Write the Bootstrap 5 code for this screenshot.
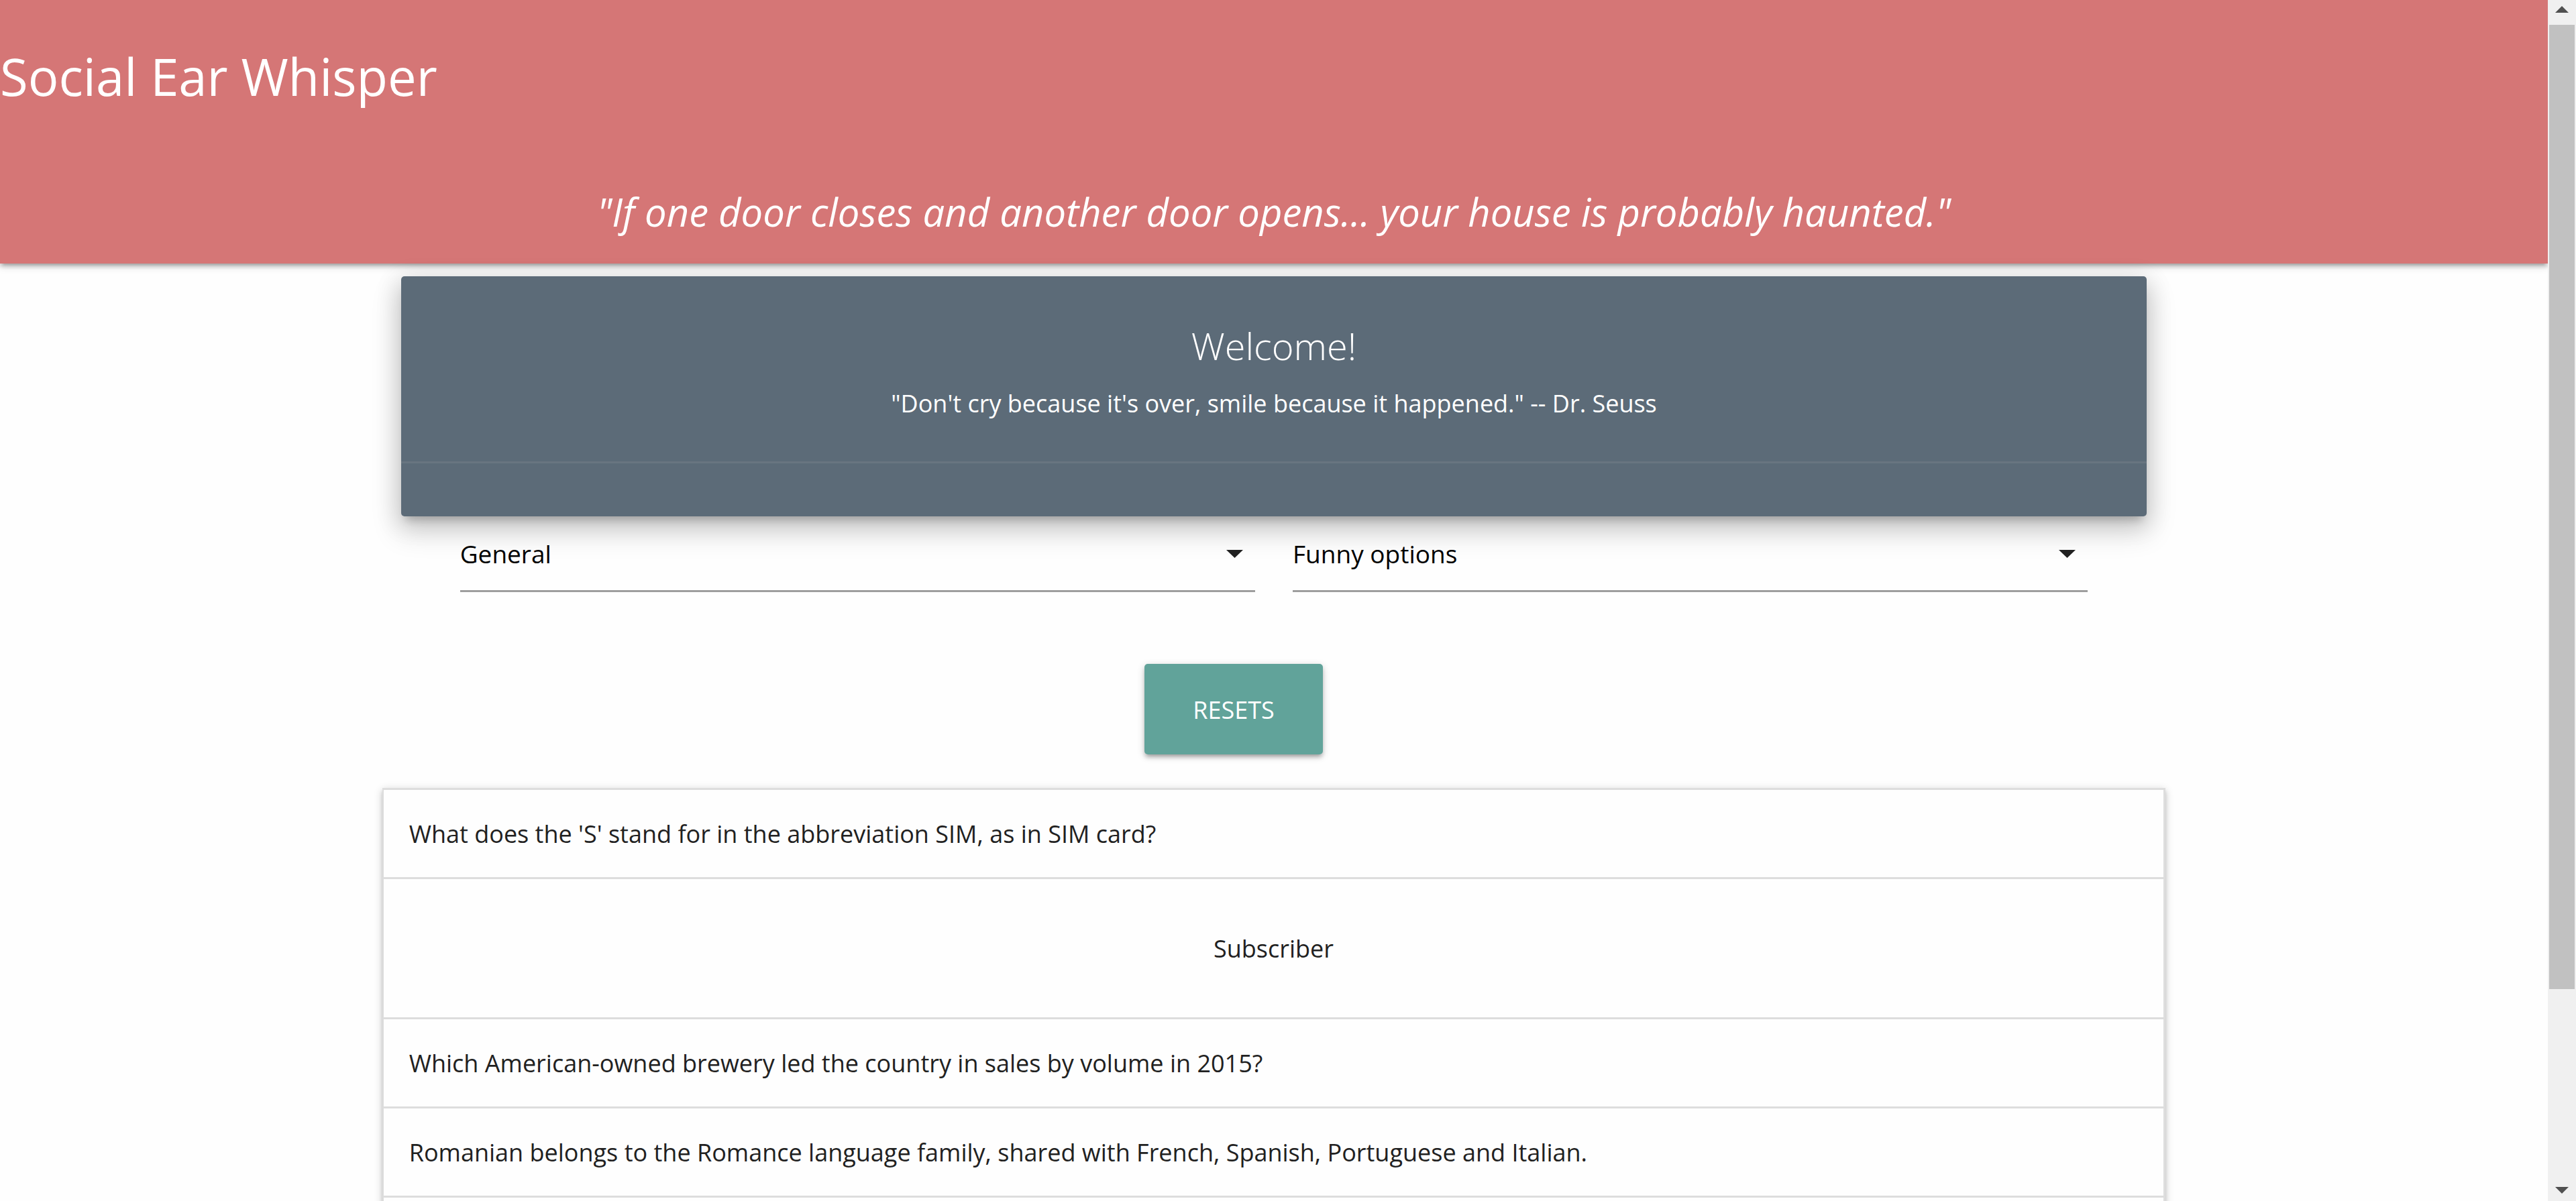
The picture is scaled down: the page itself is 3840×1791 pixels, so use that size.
<!DOCTYPE html>
<html lang="en">
<head>
<meta charset="utf-8">
<meta name="viewport" content="width=device-width, initial-scale=1">
<title>Social Ear Whisper</title>
<link href="https://cdn.jsdelivr.net/npm/bootstrap@5.3.0/dist/css/bootstrap.min.css" rel="stylesheet">
<style>
  body { font-family: "Open Sans", "Noto Sans", sans-serif; font-size: 36px; line-height: 56px; color: #212121; background: #fefefe; }
  .site-head { background: #d57676; padding: 64px 0 37px; box-shadow: 0 5px 5px 0 rgba(0,0,0,.14), 0 7px 3px -5px rgba(0,0,0,.12), 0 3px 12px 0 rgba(0,0,0,.2); }
  .brand { font-size: 76px; line-height: 100px; }
  .tagline { font-size: 58px; line-height: 80px; margin-top: 112px; }
  .page-body { width: 70%; }
  .welcome { margin: 19px 28px 0; background: #5c6b78; border-radius: 5px; box-shadow: 0 20px 42px 5px rgba(0,0,0,.14), 0 8px 35px 5px rgba(0,0,0,.12), 0 12px 12px -7px rgba(0,0,0,.2); }
  .welcome-main { padding: 60px 60px 58px; }
  .welcome-title { font-size: 56px; line-height: 86px; font-weight: 300; }
  .welcome-foot { border-top: 3px solid #687580; height: 82px; }
  .filters { padding: 0 116px; gap: 56px; }
  .filter-select { appearance: none; width: 100%; height: 113px; padding: 2px 0 0; border: 0; border-bottom: 3px solid #9e9e9e; border-radius: 0; background: transparent; color: #000; font-size: 37px; outline: 0; }
  .caret { right: 18px; top: 50px; width: 25px; height: 12px; pointer-events: none; }
  .reset-bar { padding: 107px 120px 50px 0; }
  .btn-reset, .btn-reset:hover { background: #61a39a; color: #fff; font-size: 36px; line-height: 56px; padding: 41px 72px 38px; border: 0; border-radius: 5px; box-shadow: 0 5px 5px 0 rgba(0,0,0,.14), 0 7px 3px -5px rgba(0,0,0,.12), 0 3px 12px 0 rgba(0,0,0,.2); }
  .questions { border: solid #ddd; border-width: 3px 3px 0 2px; padding-bottom: 130px; background: #fefefe; box-shadow: 0 5px 5px 0 rgba(0,0,0,.14), 0 7px 3px -5px rgba(0,0,0,.12), 0 3px 12px 0 rgba(0,0,0,.2); }
  .question, .answer { border: 0; border-bottom: 3px solid #ddd; color: #212121; }
  .question { background: transparent; padding: 38px 38px 36px; }
  .answer { padding: 76px 38px 74px; }
  .scroll-rail { width: 42px; background: #f0f0f0; padding: 9px 2px 11px; }
  .scroll-thumb { background: #c1c1c1; height: 81.2%; margin-top: 18px; }
  .rail-arrow { width: 20px; height: 10px; fill: #505050; }
</style>
</head>
<body>
<div class="d-flex vh-100 overflow-hidden">
  <div class="flex-grow-1 overflow-hidden">
    <header class="site-head text-white">
      <h1 class="brand fw-normal mb-0">Social Ear Whisper</h1>
      <p class="tagline fst-italic text-center mb-0">"If one door closes and another door opens... your house is probably haunted."</p>
    </header>

    <main class="page-body mx-auto">
      <section class="welcome text-white text-center">
        <div class="welcome-main">
          <h2 class="welcome-title mb-3">Welcome!</h2>
          <p class="mb-0">"Don't cry because it's over, smile because it happened." -- Dr. Seuss</p>
        </div>
        <div class="welcome-foot"></div>
      </section>

      <form>
        <div class="filters d-flex">
          <div class="col position-relative">
            <select class="filter-select" id="category" aria-label="Category"><option>General</option></select>
            <svg class="caret position-absolute" viewBox="0 0 25 12" fill="#212121" aria-hidden="true"><path d="M0 0h25L12.500 12z"/></svg>
          </div>
          <div class="col position-relative">
            <select class="filter-select" id="funny" aria-label="Funny options"><option>Funny options</option></select>
            <svg class="caret position-absolute" viewBox="0 0 25 12" fill="#212121" aria-hidden="true"><path d="M0 0h25L12.500 12z"/></svg>
          </div>
        </div>
        <div class="reset-bar d-flex justify-content-center">
          <button type="button" class="btn btn-reset text-uppercase">Resets</button>
        </div>
      </form>

      <ul class="questions list-unstyled mb-0">
        <li>
          <button type="button" class="question d-block w-100 text-start" aria-expanded="true" aria-controls="answer-1">What does the 'S' stand for in the abbreviation SIM, as in SIM card?</button>
          <div class="answer text-center" id="answer-1">Subscriber</div>
        </li>
        <li>
          <button type="button" class="question d-block w-100 text-start" aria-expanded="false">Which American-owned brewery led the country in sales by volume in 2015?</button>
        </li>
        <li>
          <button type="button" class="question d-block w-100 text-start" aria-expanded="false">Romanian belongs to the Romance language family, shared with French, Spanish, Portuguese and Italian.</button>
        </li>
      </ul>
    </main>
  </div>

  <aside class="scroll-rail d-flex flex-column flex-shrink-0" aria-hidden="true">
    <svg class="rail-arrow flex-shrink-0 align-self-center" viewBox="0 0 20 10"><path d="M10 0l10 10H0z"/></svg>
    <div class="scroll-thumb flex-shrink-0"></div>
    <svg class="rail-arrow flex-shrink-0 align-self-center mt-auto" viewBox="0 0 20 10"><path d="M0 0h20L10 10z"/></svg>
  </aside>
</div>
<script src="https://cdn.jsdelivr.net/npm/bootstrap@5.3.0/dist/js/bootstrap.bundle.min.js"></script>
</body>
</html>
